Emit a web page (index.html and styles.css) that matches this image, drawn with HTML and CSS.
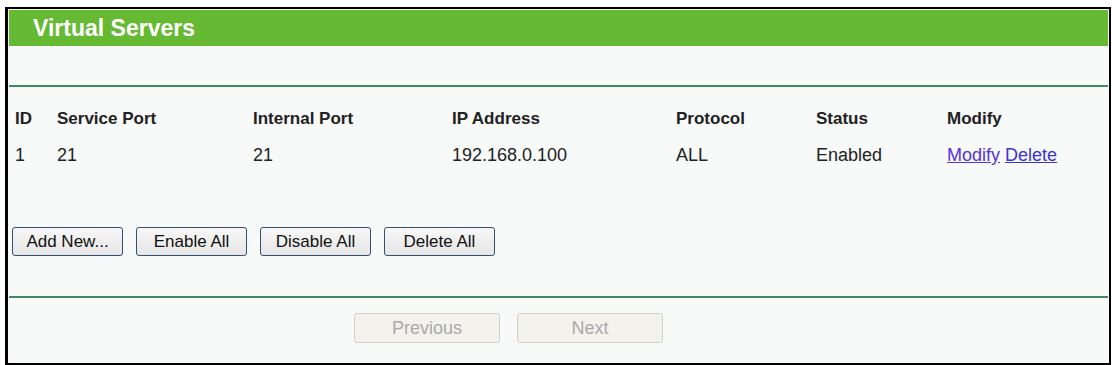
FILE: index.html
```html
<!DOCTYPE html>
<html>
<head>
<meta charset="utf-8">
<link rel="stylesheet" href="styles.css">
</head>
<body>
<div class="frame">
  <div class="title-bar">Virtual Servers</div>
  <div class="gap-top"></div>
  <div class="rule"></div>
  <div class="content">
    <div class="grid">
      <div class="th">ID</div>
      <div class="th">Service Port</div>
      <div class="th">Internal Port</div>
      <div class="th">IP Address</div>
      <div class="th">Protocol</div>
      <div class="th">Status</div>
      <div class="th">Modify</div>
      <div class="td">1</div>
      <div class="td">21</div>
      <div class="td">21</div>
      <div class="td">192.168.0.100</div>
      <div class="td">ALL</div>
      <div class="td">Enabled</div>
      <div class="td"><a class="link visited" href="#">Modify</a> <a class="link" href="#">Delete</a></div>
    </div>
    <div class="actions">
      <button class="btn">Add New...</button>
      <button class="btn">Enable All</button>
      <button class="btn">Disable All</button>
      <button class="btn">Delete All</button>
    </div>
  </div>
  <div class="rule"></div>
  <div class="pager">
    <button class="btn-dis" disabled>Previous</button>
    <button class="btn-dis" disabled>Next</button>
  </div>
</div>
</body>
</html>
```
FILE: styles.css
```css
html, body {
  margin: 0;
  padding: 0;
  background: #ffffff;
}
body {
  font-family: "Liberation Sans", Arial, sans-serif;
  color: #1e1e1e;
}
.frame {
  margin: 7px 0 0 5px;
  width: 1099px;
  height: 353px;
  border-style: solid;
  border-color: #000;
  border-width: 2px 2px 3px 3px;
  background: #f8f9f9;
  padding: 1px 1px 0 1px;
  display: flex;
  flex-direction: column;
}
.title-bar {
  height: 36px;
  background: #66b932;
  color: #fff;
  font-weight: bold;
  font-size: 23px;
  line-height: 36px;
  padding-left: 24px;
  box-sizing: border-box;
}
.gap-top {
  height: 39px;
}
.rule {
  height: 2px;
  background: #3f8a68;
}
.content {
  height: 209px;
  box-sizing: border-box;
  padding-top: 13px;
  padding-left: 6px;
}
.grid {
  display: grid;
  grid-template-columns: 42px 196px 199px 224px 140px 131px 150px;
  grid-auto-rows: 37px;
  align-items: center;
}
.th {
  font-size: 17px;
  font-weight: bold;
  color: #222;
}
.td {
  font-size: 18px;
  color: #222;
}
.link {
  color: #3a33d6;
  text-decoration: underline;
}
.link.visited {
  color: #5533dd;
}
.actions {
  display: flex;
  gap: 13px;
  margin-top: 53px;
  margin-left: -3px;
}
.btn {
  width: 111px;
  height: 29px;
  font-family: "Liberation Sans", Arial, sans-serif;
  font-size: 17px;
  color: #111;
  background: linear-gradient(#f7f7f7, #e6e6e6);
  border: 1px solid #33506e;
  border-radius: 3px;
  padding: 0;
}
.pager {
  display: flex;
  gap: 17px;
  padding-left: 345px;
  padding-top: 15px;
}
.btn-dis {
  width: 146px;
  height: 30px;
  font-family: "Liberation Sans", Arial, sans-serif;
  font-size: 18px;
  color: #a9a9a9;
  background: #f3f2ec;
  border: 1px solid #d3d1c6;
  border-radius: 3px;
  padding: 0;
}
```
